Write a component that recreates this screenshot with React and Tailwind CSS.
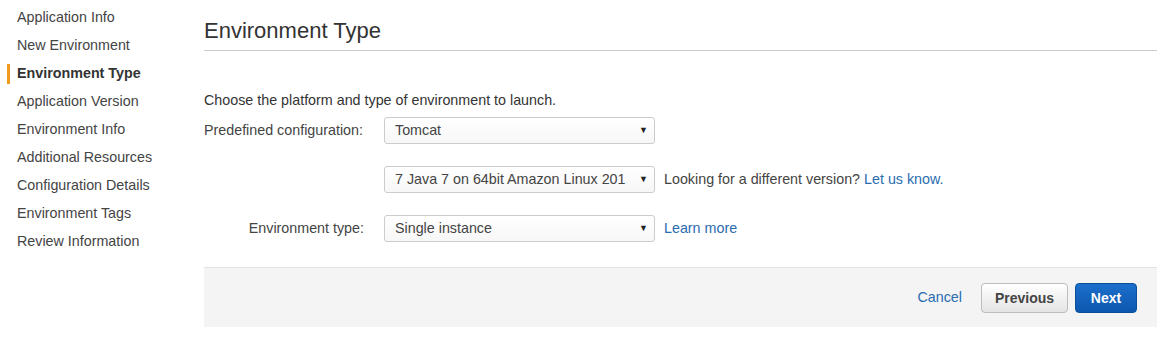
import React from "react";

const steps = [
  "Application Info",
  "New Environment",
  "Environment Type",
  "Application Version",
  "Environment Info",
  "Additional Resources",
  "Configuration Details",
  "Environment Tags",
  "Review Information",
];

const Select = ({ value }) => (
  <div className="w-[271px] h-[27px] border border-[#cccccc] rounded-[3px] bg-gradient-to-b from-white to-[#f7f7f7] flex items-center justify-between pl-[10px] pr-[6px] text-[14.3px] text-[#444]">
    <span>{value}</span>
    <span className="text-[9px] text-[#222]">▼</span>
  </div>
);

export default function App() {
  return (
    <div className="w-[1166px] h-[337px] bg-white flex font-['Liberation_Sans',Arial,sans-serif] text-[#444]">
      <div className="w-[204px] pt-[4px]">
        {steps.map((s) => (
          <div key={s} className="relative h-[28px] flex items-center pl-[17px] text-[14.3px]">
            {s === "Environment Type" && (
              <span className="absolute left-[7px] top-[4px] w-[3px] h-[20px] bg-[#f09a1e]" />
            )}
            <span className={s === "Environment Type" ? "font-bold text-[#333]" : "text-[#444]"}>{s}</span>
          </div>
        ))}
      </div>

      <div className="w-[953px]">
        <div className="pt-[18px] pb-[7px] border-b border-[#cccccc] text-[22px] text-[#333] leading-[25px]">
          Environment Type
        </div>

        <div className="pt-[41px] text-[14.3px] leading-[16px] text-[#333]">
          Choose the platform and type of environment to launch.
        </div>

        <div className="flex items-center mt-[9px]">
          <div className="w-[180px] text-[14.3px] text-[#444]">Predefined configuration:</div>
          <Select value="Tomcat" />
        </div>

        <div className="flex items-center mt-[22px]">
          <div className="w-[180px]" />
          <Select value="7 Java 7 on 64bit Amazon Linux 201" />
          <div className="ml-[9px] text-[14.3px] text-[#444]">
            Looking for a different version? <span className="text-[#2a6cb0]">Let us know.</span>
          </div>
        </div>

        <div className="flex items-center mt-[22px]">
          <div className="w-[180px] pr-[20px] text-right text-[14.3px] text-[#444]">Environment type:</div>
          <Select value="Single instance" />
          <div className="ml-[9px] text-[14.3px] text-[#2a6cb0]">Learn more</div>
        </div>

        <div className="mt-[25px] h-[60px] bg-[#f4f4f4] border-t border-[#e3e3e3] flex items-center justify-end pr-[20px] pt-[1px]">
          <span className="text-[14.3px] text-[#2a6cb0] mr-[19px]">Cancel</span>
          <button className="w-[87px] h-[30px] rounded-[4px] border border-[#bdbdbd] bg-gradient-to-b from-white to-[#e4e4e4] text-[14px] font-bold text-[#444] mr-[7px]">
            Previous
          </button>
          <button className="w-[62px] h-[30px] rounded-[4px] border border-[#0a4f9c] bg-gradient-to-b from-[#1b6fcb] to-[#0c57b0] text-[14px] font-bold text-white">
            Next
          </button>
        </div>
      </div>
    </div>
  );
}
